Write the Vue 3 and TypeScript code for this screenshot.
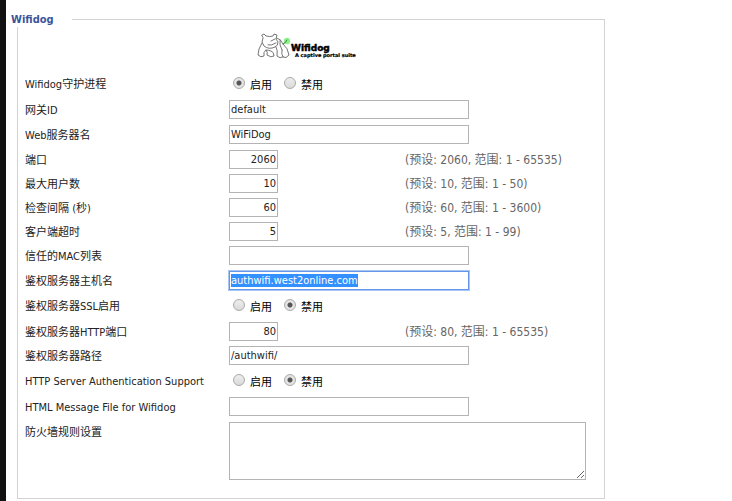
<script setup lang="ts">
import { onMounted, reactive, ref } from 'vue'

type Kind = 'radio' | 'text' | 'number' | 'area'

interface Field {
  id: string
  kind: Kind
  label: string
  hint?: string
}

const fields: Field[] = [
  { id: 'daemon', kind: 'radio', label: 'Wifidog守护进程' },
  { id: 'gateway', kind: 'text', label: '网关ID' },
  { id: 'webname', kind: 'text', label: 'Web服务器名' },
  { id: 'port', kind: 'number', label: '端口', hint: '(预设: 2060, 范围: 1 - 65535)' },
  { id: 'maxusers', kind: 'number', label: '最大用户数', hint: '(预设: 10, 范围: 1 - 50)' },
  { id: 'interval', kind: 'number', label: '检查间隔 (秒)', hint: '(预设: 60, 范围: 1 - 3600)' },
  { id: 'timeout', kind: 'number', label: '客户端超时', hint: '(预设: 5, 范围: 1 - 99)' },
  { id: 'maclist', kind: 'text', label: '信任的MAC列表' },
  { id: 'authhost', kind: 'text', label: '鉴权服务器主机名' },
  { id: 'authssl', kind: 'radio', label: '鉴权服务器SSL启用' },
  { id: 'authport', kind: 'number', label: '鉴权服务器HTTP端口', hint: '(预设: 80, 范围: 1 - 65535)' },
  { id: 'authpath', kind: 'text', label: '鉴权服务器路径' },
  { id: 'httpauth', kind: 'radio', label: 'HTTP Server Authentication Support' },
  { id: 'msgfile', kind: 'text', label: 'HTML Message File for Wifidog' },
  { id: 'firewall', kind: 'area', label: '防火墙规则设置' },
]

const values = reactive<Record<string, string>>({
  daemon: '1',
  gateway: 'default',
  webname: 'WiFiDog',
  port: '2060',
  maxusers: '10',
  interval: '60',
  timeout: '5',
  maclist: '',
  authhost: 'authwifi.west2online.com',
  authssl: '0',
  authport: '80',
  authpath: '/authwifi/',
  httpauth: '0',
  msgfile: '',
  firewall: '',
})

const form = ref<HTMLFormElement | null>(null)

onMounted(() => {
  const host = form.value?.querySelector<HTMLInputElement>('#authhost')
  host?.focus()
  host?.select()
})
</script>

<template>
  <main class="page">
    <form ref="form" class="form" @submit.prevent>
      <fieldset class="panel">
        <legend class="title">Wifidog</legend>

        <div class="brand">
          <svg class="logo" viewBox="0 0 104 30" role="img" aria-label="Wifidog">
            <circle cx="31" cy="9" r="3.2" fill="#8df28d" />
            <g fill="none" stroke="#666" stroke-width="0.9" stroke-linejoin="round" stroke-linecap="round">
              <path d="M6 3 L8 2 L10 4 Q14 5 17 4 L18 2 L21 3 L20 7 L22 10 Q22 14 19 15 Q13 18 8 14 L6 10 L7 6 Z" />
              <path d="M12 13 Q15 14 20 11 M15 9 L19 7" />
              <path d="M6 11 Q2 17 2 23 Q5 26 8 24 Q7 20 10 18 Q12 20 11 23 Q15 26 18 24 Q18 20 15 19 Q13 18 10 18" />
              <path d="M21 6 Q25 7 27 12 Q32 16 33 23 Q30 27 27 25 Q25 22 26 18 M20 15 Q22 18 21 24 Q24 27 27 25 M24 8 Q23 13 26 18" />
              <path d="M27 12 Q30 11 31 8" stroke="#337733" />
            </g>
            <text class="logo-name" x="35" y="19">Wifidog</text>
            <text class="logo-tag" x="39" y="25">A captive portal suite</text>
          </svg>
        </div>

        <div v-for="f in fields" :key="f.id" class="row" :class="'row-' + f.kind">
          <template v-if="f.kind === 'radio'">
            <span :id="f.id + '-label'" class="name">{{ f.label }}</span>
            <div class="choices" role="radiogroup" :aria-labelledby="f.id + '-label'">
              <label class="choice">
                <input v-model="values[f.id]" class="dot" type="radio" :name="f.id" value="1" />
                <span class="choice-text">启用</span>
              </label>
              <label class="choice">
                <input v-model="values[f.id]" class="dot" type="radio" :name="f.id" value="0" />
                <span class="choice-text">禁用</span>
              </label>
            </div>
          </template>

          <template v-else>
            <label class="name" :for="f.id">{{ f.label }}</label>
            <textarea v-if="f.kind === 'area'" :id="f.id" v-model="values[f.id]" class="box area"></textarea>
            <input
              v-else
              :id="f.id"
              v-model="values[f.id]"
              class="box"
              :class="f.kind"
              type="text"
              spellcheck="false"
            />
            <span v-if="f.hint" class="hint">{{ f.hint }}</span>
          </template>
        </div>
      </fieldset>
    </form>
  </main>
</template>

<style>
body {
  margin: 0;
  background: #fff;
}
</style>

<style scoped>
.page {
  box-sizing: border-box;
  min-height: 100vh;
  padding: 12px 127px 2px 11px;
  border-left: 6px solid #111;
  font-family: "DejaVu Sans Condensed", "Noto Sans", "Noto Sans CJK SC", sans-serif;
  font-size: 11px;
  line-height: 22px;
  color: #222;
}

.panel {
  min-width: 0;
  margin: 0;
  padding: 5px 18px 18px 7px;
  border: 1px solid #d3d3d3;
}

.title {
  box-sizing: border-box;
  width: 65px;
  margin-left: -18px;
  padding: 0 0 0 4px;
  background: #fff;
  color: #3b559b;
  font-weight: 700;
  line-height: 15px;
}

.brand {
  display: flex;
  justify-content: center;
  padding: 0 0 12px 4px;
}

.logo {
  width: 104px;
  height: 30px;
}

.logo-name,
.logo-tag {
  font-family: "DejaVu Sans", sans-serif;
  font-weight: 700;
  fill: #000;
  stroke: #000;
}

.logo-name {
  font-size: 9px;
  stroke-width: 0.5px;
}

.logo-tag {
  font-size: 5px;
  stroke-width: 0.2px;
}

.row {
  display: grid;
  grid-template-columns: 204px minmax(0, 1fr);
  align-items: start;
  height: 25px;
}

.row-number {
  grid-template-columns: 204px 176px minmax(0, 1fr);
  height: 24px;
}

.row-radio {
  height: 26px;
}

.row-area {
  height: auto;
}

.name,
.hint {
  white-space: nowrap;
}

.hint {
  color: #666;
  font-size: 12px;
  line-height: 20px;
}

.box {
  box-sizing: border-box;
  height: 19px;
  margin: 0;
  padding: 1px;
  border: 1px solid #b4b4b4;
  border-radius: 0;
  background: #fff;
  color: #222;
  font: inherit;
  line-height: 15px;
}

.box:focus {
  outline: 1px solid #a9c6f7;
  border-color: #6496e8;
}

.box::selection {
  background: #3390ff;
  color: #fff;
}

.text {
  width: 240px;
}

.number {
  width: 49px;
  text-align: right;
}

.area {
  width: 100%;
  height: 58px;
  resize: both;
}

.choices {
  display: flex;
  gap: 12px;
  padding-left: 4px;
}

.choice {
  display: flex;
  align-items: flex-start;
  gap: 5px;
}

.choice-text {
  padding-top: 1px;
  color: #000;
}

.dot {
  appearance: none;
  box-sizing: border-box;
  width: 12px;
  height: 12px;
  margin: 3px 0 0;
  border: 1px solid #aaa;
  border-radius: 50%;
  background: linear-gradient(#eee, #d9d9d9);
}

.dot:checked {
  background: radial-gradient(circle, #555 0 2px, #e4e4e4 3px);
}
</style>
